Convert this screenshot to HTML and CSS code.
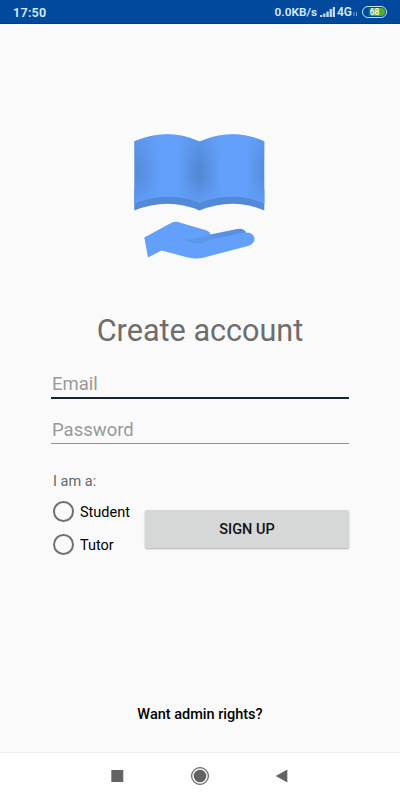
FILE: index.html
```html
<!DOCTYPE html>
<html lang="en">
<head>
    <meta charset="UTF-8">
    <meta name="viewport" content="width=device-width, initial-scale=1.0">
    <title>Create account</title>
    <link rel="stylesheet" href="styles.css">
</head>
<body>
    <header class="status-bar">
        <span class="clock">17:50</span>
        <span class="speed">0.0KB/s</span>
        <svg class="signal" width="15" height="12" viewBox="0 0 15 12">
            <path d="M0 9h2.300v2H0zM3.200 7.500h2.300V11H3.200zM6.400 5.500h2.300V11H6.400zM9.600 3h2.300v8H9.600zM12.700 1H15v10h-2.300z"/>
        </svg>
        <span class="network">4G</span>
        <svg class="data" width="5" height="6" viewBox="0 0 5 6">
            <path d="M1 1v4M3.5 1v4"/>
        </svg>
        <span class="battery"><span class="level">68</span></span>
    </header>

    <main>
        <svg class="logo" width="160" height="150" viewBox="0 0 160 150">
            <defs>
                <linearGradient id="pages">
                    <stop offset="0" stop-color="#568cdd"/>
                    <stop offset="0.06" stop-color="#5990e2"/>
                    <stop offset="0.2" stop-color="#62a0fb"/>
                    <stop offset="0.33" stop-color="#62a0fb"/>
                    <stop offset="0.5" stop-color="#5388d3"/>
                    <stop offset="0.67" stop-color="#62a0fb"/>
                    <stop offset="0.86" stop-color="#62a0fb"/>
                    <stop offset="1" stop-color="#568cdd"/>
                </linearGradient>
                <linearGradient id="fade" x2="0" y2="1">
                    <stop offset="0" stop-color="#62a0fb" stop-opacity="0.65"/>
                    <stop offset="0.45" stop-color="#62a0fb" stop-opacity="0"/>
                    <stop offset="0.65" stop-color="#62a0fb" stop-opacity="0"/>
                    <stop offset="1" stop-color="#62a0fb" stop-opacity="0.8"/>
                </linearGradient>
            </defs>
            <!-- book -->
            <path fill="#5389d8" d="M14.3 70V90.5Q48 77 79.5 90.5Q113 77 144.3 90.5V70z"/>
            <path fill="url(#pages)" d="M14.3 21.3Q48 7 79.5 21.5Q113 7 144.3 21.3V83.5Q113 70 79.5 83Q48 70 14.3 83.5z"/>
            <path fill="url(#fade)" d="M14.3 21.3Q48 7 79.5 21.5Q113 7 144.3 21.3V83.5Q113 70 79.5 83Q48 70 14.3 83.5z"/>
            <!-- hand -->
            <path fill="#5890e5" d="M88 115L117 109Q123 107.500 126 112L120 120L82 126z"/>
            <path fill="#62a0fb" d="M24.300 117.500L51 103Q54 101.300 58 102L86 110.200Q91 112 90.500 115.500Q95 118.500 100 117.500L124 112.600Q133 111.500 134.500 118Q135 123.500 128 126L84 137.500Q77 139.500 68 137.500L41.500 130.500L28 137.500z"/>
            <path fill="#5b95ec" d="M49 114.500Q63 121 72 119.500Q82 116.500 90.500 115.500Q94 118.500 101 117.500Q89 119 82 123.500Q71 124 49 114.500z"/>
        </svg>

        <h1>Create account</h1>

        <form>
            <input class="field email" type="email" placeholder="Email">
            <input class="field" type="password" placeholder="Password">
            <p class="role-label">I am a:</p>
            <div class="row">
                <div class="roles">
                    <label><input type="radio" name="role" value="student">Student</label>
                    <label><input type="radio" name="role" value="tutor">Tutor</label>
                </div>
                <button type="submit">SIGN UP</button>
            </div>
        </form>

        <a class="admin">Want admin rights?</a>
    </main>

    <nav>
        <svg width="22" height="22" viewBox="0 0 22 22"><path d="M5.300 5h12v12h-12z"/></svg>
        <svg width="22" height="22" viewBox="0 0 22 22">
            <circle cx="11" cy="11" r="6.300"/>
            <circle class="ring" cx="11" cy="11" r="8.400"/>
        </svg>
        <svg width="22" height="22" viewBox="0 0 22 22"><path d="M15.300 4.500v13L3.800 11z"/></svg>
    </nav>
</body>
</html>
```

FILE: styles.css
```css
* {
    box-sizing: border-box;
}
body {
    display: flex;
    flex-direction: column;
    height: 100vh;
    margin: 0;
    font-family: Roboto, sans-serif;
    background-color: #fafafa;
    color: #000;
}
.status-bar {
    display: flex;
    align-items: center;
    height: 24px;
    padding: 1px 13px 0;
    background-color: #01499d;
    border-bottom: 1px solid #083c80;
    color: #d9ecff;
    font-size: 12px;
    font-weight: 600;
}
.clock {
    margin-right: auto;
    font-size: 12.5px;
    letter-spacing: 0.3px;
}
.speed {
    font-size: 11.8px;
}
.signal {
    margin: 0 2px 0 3px;
    fill: #c5dcf5;
}
.data {
    margin: 4px 4px 0 1px;
    stroke: #7ba3d3;
    fill: none;
}
.battery {
    width: 25px;
    height: 12px;
    padding: 1px;
    border: 1px solid #c9e3ee;
    border-radius: 6px;
}
.level {
    display: block;
    height: 8px;
    border-radius: 4px;
    background: linear-gradient(to right, #01499d 18%, #4fae35 42%, #4fae35);
    color: #fff;
    font-size: 8.5px;
    line-height: 9px;
    text-align: center;
}
main {
    display: flex;
    flex: 1;
    flex-direction: column;
    align-items: center;
}
.logo {
    margin-top: 96px;
}
h1 {
    margin: 43px 0 0;
    color: #6d6d6d;
    font-size: 30.6px;
    font-weight: 400;
    line-height: 36px;
}
form {
    width: 298px;
    margin-top: 22px;
}
.field {
    display: block;
    width: 100%;
    height: 45px;
    padding: 17px 1px 0;
    border: none;
    border-bottom: 1px solid #929292;
    background: none;
    font-family: inherit;
    font-size: 18.5px;
    outline: none;
}
.field.email {
    height: 28px;
    padding-top: 0;
    border-bottom: 2px solid #17262e;
}
.field::placeholder {
    color: #999;
}
.role-label {
    margin: 29px 0 0 2px;
    color: #666;
    font-size: 14.5px;
    line-height: 18px;
}
.row {
    display: flex;
    align-items: center;
    margin-top: 5px;
}
.roles {
    width: 94px;
}
.roles label {
    display: flex;
    align-items: center;
    height: 33px;
    font-size: 14.5px;
}
.roles input {
    appearance: none;
    width: 21px;
    height: 21px;
    margin: -2px 6px 0 2px;
    border: 2px solid #707070;
    border-radius: 50%;
}
button {
    flex: 1;
    height: 38px;
    border: none;
    border-radius: 2px;
    background-color: #d6d8d7;
    box-shadow: 0 1px 2px rgba(0, 0, 0, 0.3);
    font-family: inherit;
    font-size: 14.5px;
    font-weight: 500;
    color: #111;
}
.admin {
    margin-top: auto;
    margin-bottom: 28px;
    font-size: 14.5px;
    font-weight: 500;
    line-height: 18px;
}
nav {
    display: flex;
    align-items: center;
    justify-content: center;
    gap: 61px;
    height: 48px;
    padding-bottom: 2px;
    border-top: 1px solid #f0f0f0;
    background-color: #fff;
    fill: #636363;
}
.ring {
    fill: none;
    stroke: #636363;
    stroke-width: 1.2;
}
```
